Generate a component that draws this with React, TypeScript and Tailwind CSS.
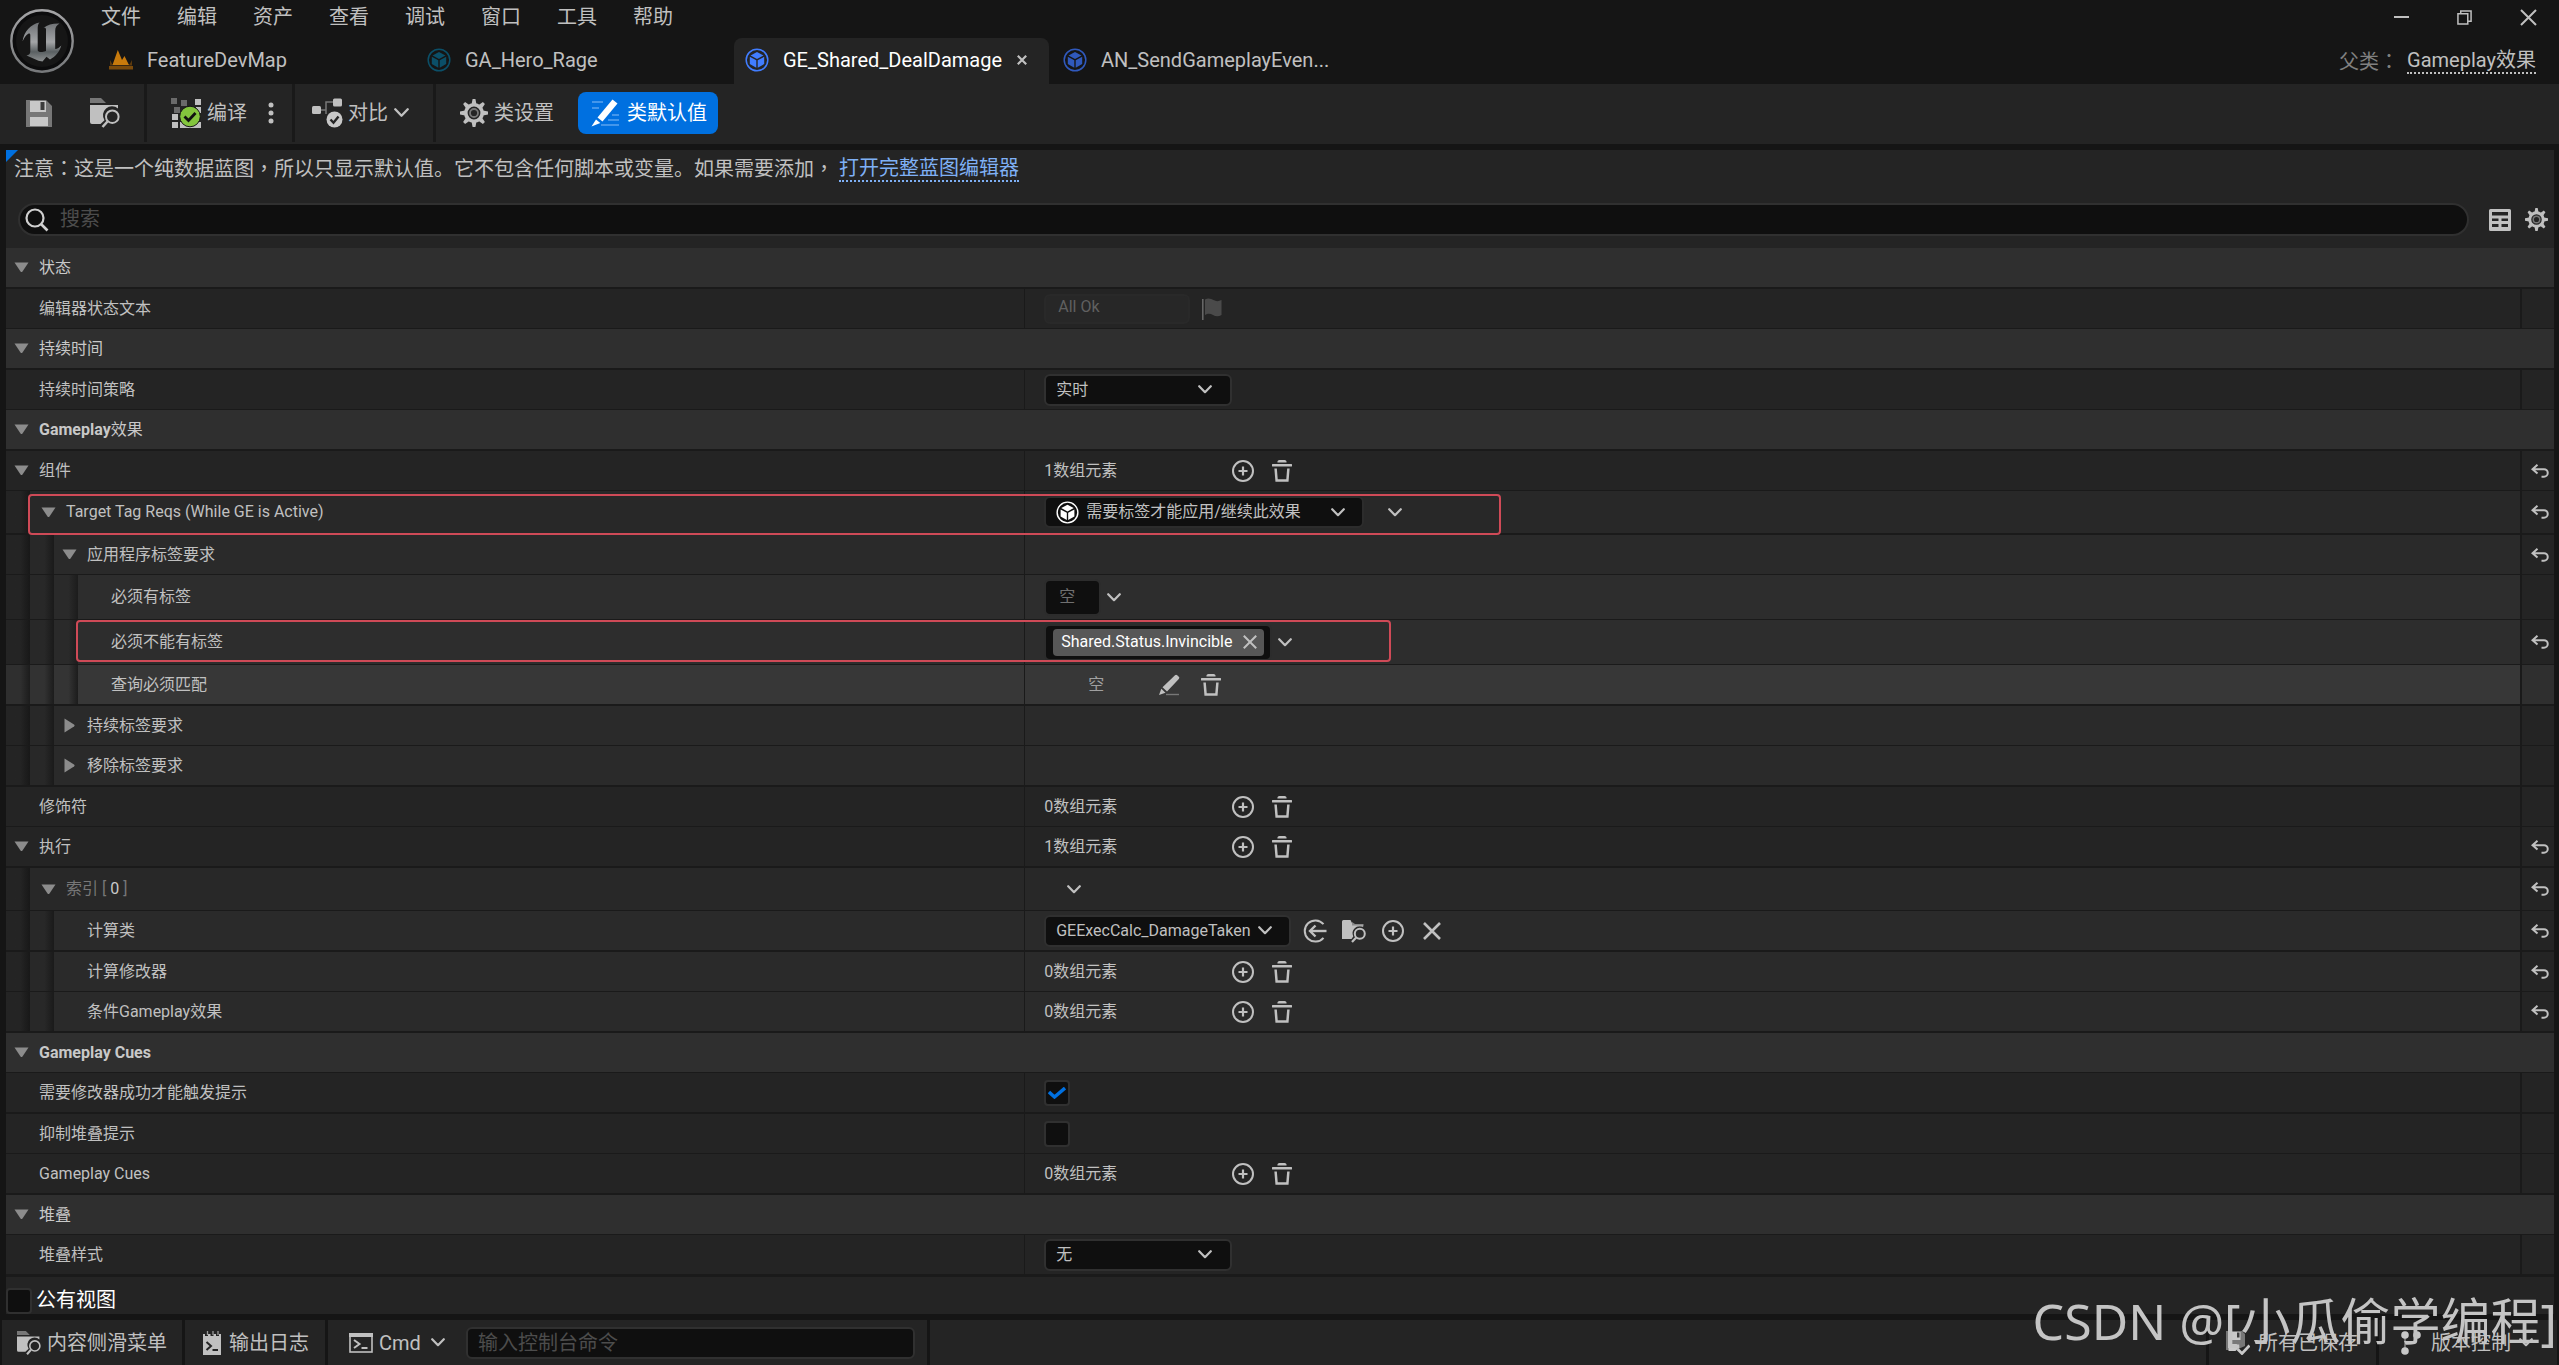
import { useState } from "react";
import type { ReactNode } from "react";

type IconProps = { className?: string };

/* ---------- icons ---------- */

function UnrealLogo({ className = "" }: IconProps) {
  return (
    <svg viewBox="0 0 64 64" className={className} aria-hidden="true">
      <defs>
        <linearGradient id="ue-ring" x1="0" y1="0" x2="0" y2="1">
          <stop offset="0" stopColor="#a4a4a6" />
          <stop offset="1" stopColor="#77797b" />
        </linearGradient>
        <linearGradient id="ue-letter" x1="0" y1="0" x2="0" y2="1">
          <stop offset="0" stopColor="#6d7073" />
          <stop offset="0.5" stopColor="#a3a5a7" />
          <stop offset="0.75" stopColor="#5a6062" />
          <stop offset="1" stopColor="#8d9091" />
        </linearGradient>
      </defs>
      <circle cx="32" cy="32" r="30.7" fill="#0c0c0d" stroke="url(#ue-ring)" strokeWidth="2.4" />
      <circle cx="32" cy="32" r="26" fill="#161616" />
      <path
        d="M12.500 32.500C14 22 21 15 29.500 13.500C28 15 27.700 17 27.700 20V41.500C29 43.300 31.500 43.600 36 42V20.500C36 19 35 18.300 33.500 19C37.500 15.500 43 14.300 49.500 14.500C46.500 16.200 45.200 18.500 45.200 22V40C47.500 39.800 49.500 38.500 51.300 36.500C49.500 43 45.500 47.500 40 50.500L36.500 47.800L32.500 52.500C27 52 22 48.500 16.500 46.500C19 46 20.300 45 20.300 42.500V26C20.300 24.500 19.500 24 18.200 24.700C16 26 14 29 12.500 32.500Z"
        fill="url(#ue-letter)"
      />
    </svg>
  );
}

function LevelIcon({ className = "" }: IconProps) {
  return (
    <svg viewBox="0 0 24 20" className={className} aria-hidden="true">
      <path d="M0 16h24v3.500H0z" fill="#7a4a0c" />
      <path d="M1 10l2.500 4.500h17L23 10v5.500H1z" fill="#5d3a0e" />
      <path d="M3.500 15L8.800 0l4.200 10 2.500-4L20 15z" fill="#c87a0c" />
    </svg>
  );
}

function CubeIcon({ className = "" }: IconProps) {
  return (
    <svg viewBox="0 0 24 24" className={className} fill="currentColor" aria-hidden="true">
      <circle cx="12" cy="12" r="10.800" fill="none" stroke="currentColor" strokeWidth="1.500" />
      <path d="M12 4l6.500 3.400L12 11 5.500 7.400z" />
      <path d="M4.800 8.800l6.500 3.500v7.400l-6.500-3.600z" />
      <path d="M19.200 8.800l-6.500 3.500v7.400l6.500-3.600z" />
    </svg>
  );
}

function SaveIcon({ className = "" }: IconProps) {
  return (
    <svg viewBox="0 0 26 27" className={className} aria-hidden="true">
      <path d="M0 0h20l6 6v21H0z" fill="#777777" />
      <path d="M4 1h16v11H4zM4 17h18v9H4z" fill="#c8c8c8" />
      <path d="M14.500 2h4v8h-4z" fill="#3c3c3c" />
    </svg>
  );
}

function BrowseIcon({ className = "" }: IconProps) {
  return (
    <svg viewBox="0 0 30 30" className={className} aria-hidden="true">
      <path d="M0 0h11l5 5H0z" fill="#777777" />
      <path d="M0 7h28v3.500a9 9 0 0 0-13.500 11.700L10.500 26H2a2 2 0 0 1-2-2z" fill="#c0c0c0" />
      <circle cx="22.300" cy="18.700" r="6.300" fill="none" stroke="#c0c0c0" strokeWidth="2" />
      <path d="M17.500 23.500l-5 5.500" stroke="#c0c0c0" strokeWidth="2.600" />
    </svg>
  );
}

function CompileIcon({ className = "" }: IconProps) {
  return (
    <svg viewBox="0 0 30 30" className={className} aria-hidden="true">
      <path d="M0 0h6v6H0zM10 2h6v6h-6zM3 9h6v6H3z" fill="#6a6a6a" />
      <path d="M24 1h6v6h-6zM1 16h6v6H1zM1 24h6v6H1zM9 24h21v6H9zM25 9h5v6h-5z" fill="#c0c0c0" />
      <circle cx="19" cy="18.500" r="10.300" fill="#83c53d" stroke="#161616" strokeWidth="1" />
      <path d="M13.500 18.500l4 4 7-7.500" fill="none" stroke="#111111" strokeWidth="2.800" />
    </svg>
  );
}

function DiffIcon({ className = "" }: IconProps) {
  return (
    <svg viewBox="0 0 31 30" className={className} aria-hidden="true">
      <path d="M8 12h6V4h8M14 12v4" fill="none" stroke="#777777" strokeWidth="1.500" />
      <rect x="0" y="8" width="9" height="8" rx="1.500" fill="#c0c0c0" />
      <rect x="21" y="0.500" width="9" height="8" rx="1.500" fill="#c0c0c0" />
      <circle cx="22.500" cy="21.500" r="8" fill="#c8c8c8" />
      <path d="M18.500 21.500l3 3.200 5-6.200" fill="none" stroke="#242424" strokeWidth="2.400" />
    </svg>
  );
}

const GEAR_TEETH = [0, 45, 90, 135, 180, 225, 270, 315];

function GearIcon({ className = "" }: IconProps) {
  return (
    <svg viewBox="0 0 28 28" className={className} aria-hidden="true">
      <circle cx="14" cy="14" r="8.200" fill="none" stroke="#c0c0c0" strokeWidth="3.600" />
      {GEAR_TEETH.map((a) => (
        <path key={a} d="M11.600 5L12.600 0h2.800l1 5z" fill="#c0c0c0" transform={`rotate(${a} 14 14)`} />
      ))}
      <circle cx="14" cy="14" r="4" fill="none" stroke="#777777" strokeWidth="1.800" />
    </svg>
  );
}

function EditDefaultsIcon({ className = "" }: IconProps) {
  return (
    <svg viewBox="0 0 28 28" className={className} aria-hidden="true">
      <path d="M1 3h11M1 9h7M21 16h7M17 21h11M10 26h18" stroke="#5aa2ee" strokeWidth="1.400" />
      <path d="M21.500 0.500L26.500 4.500L11.500 22.500L6.500 18.500z" fill="#ffffff" />
      <path d="M5 20.500L9.300 24L0.500 27.500z" fill="#ffffff" />
    </svg>
  );
}

function Chevron({ className = "" }: IconProps) {
  return (
    <svg viewBox="0 0 14 9" className={className} fill="none" stroke="currentColor" strokeWidth="2.200" strokeLinecap="round" strokeLinejoin="round" aria-hidden="true">
      <path d="M1.200 1.200L7 7.200L12.800 1.200" />
    </svg>
  );
}

function SearchIcon({ className = "" }: IconProps) {
  return (
    <svg viewBox="0 0 24 24" className={className} fill="none" stroke="#d0d0d0" strokeWidth="2.200" aria-hidden="true">
      <circle cx="10" cy="10" r="8.500" />
      <path d="M16 16l6.500 6.500" strokeWidth="2.600" />
    </svg>
  );
}

function TableViewIcon({ className = "" }: IconProps) {
  return (
    <svg viewBox="0 0 22 22" className={className} aria-hidden="true">
      <path fillRule="evenodd" fill="#c0c0c0" d="M1.500 0h19A1.500 1.500 0 0 1 22 1.500v19a1.500 1.500 0 0 1-1.500 1.500h-19A1.500 1.500 0 0 1 0 20.500v-19A1.500 1.500 0 0 1 1.500 0zM3 3v3.500h16V3zM3 9.500V12h6.500V9.500zM12.500 9.500V12H19V9.500zM3 15v3h6.500v-3zM12.500 15v3H19v-3z" />
    </svg>
  );
}

function FlagIcon({ className = "" }: IconProps) {
  return (
    <svg viewBox="0 0 20 22" className={className} aria-hidden="true">
      <path d="M0.800 1v21" stroke="#666666" strokeWidth="1.600" />
      <path d="M3 1.500c3-2 6-1 8.500 0.500s5 1.500 8 0v15c-3 2-6 1.500-8.500 0s-5-2-8 0z" fill="#4a4a4a" />
    </svg>
  );
}

function PlusCircle({ className = "" }: IconProps) {
  return (
    <svg viewBox="0 0 22 22" className={className} fill="none" stroke="currentColor" strokeWidth="2" aria-hidden="true">
      <circle cx="11" cy="11" r="10" />
      <path d="M11 6.500v9M6.500 11h9" strokeWidth="2.200" />
    </svg>
  );
}

function TrashIcon({ className = "" }: IconProps) {
  return (
    <svg viewBox="0 0 20 22" className={className} aria-hidden="true">
      <path d="M5.500 2.500a2 2 0 0 1 2-2.500h5a2 2 0 0 1 2 2.500z" fill="currentColor" />
      <path d="M0.800 5.300h18.400" stroke="currentColor" strokeWidth="2.400" strokeLinecap="round" />
      <path d="M3.600 8.500l1 12h10.800l1-12" fill="none" stroke="currentColor" strokeWidth="2.500" />
    </svg>
  );
}

function PencilIcon({ className = "" }: IconProps) {
  return (
    <svg viewBox="0 0 22 22" className={className} aria-hidden="true">
      <path d="M8 20.500h13" stroke="#777777" strokeWidth="1.400" />
      <path d="M17 1.300a1.500 1.500 0 0 1 2.200 0l1.600 1.500a1.500 1.500 0 0 1 0 2.200L9 17.500l-4.500-4.200z" fill="currentColor" />
      <path d="M3.300 14.800l4.200 4L1 21z" fill="currentColor" />
    </svg>
  );
}

function ResetIcon({ className = "" }: IconProps) {
  return (
    <svg viewBox="0 0 18 14" className={className} fill="none" stroke="currentColor" strokeWidth="2" aria-hidden="true">
      <path d="M6.500 0.800L1.500 5.200L6.500 9.600M1.500 5.200H13a3.600 3.600 0 0 1 0 7.500H10.500" />
    </svg>
  );
}

function UseArrowIcon({ className = "" }: IconProps) {
  return (
    <svg viewBox="0 0 24 24" className={className} fill="none" stroke="currentColor" strokeWidth="2" aria-hidden="true">
      <path d="M20.500 5.200a10.600 10.600 0 1 0 0 13.600" />
      <path d="M23.500 12H7" strokeWidth="2.400" />
      <path d="M12.500 6.500L7 12l5.500 5.500" strokeWidth="2.400" />
    </svg>
  );
}

function FolderFindIcon({ className = "" }: IconProps) {
  return (
    <svg viewBox="0 0 24 24" className={className} aria-hidden="true">
      <path d="M10 3l3 2h8.500v2.500H10z" fill="#8a8a8a" />
      <path d="M1.500 1h7l1.500 3v2.500h11v1.300a7.300 7.300 0 0 0-9.700 9.700L9.500 20H0V2.500A1.500 1.500 0 0 1 1.500 1z" fill="#c0c0c0" />
      <circle cx="17.800" cy="14.700" r="5" fill="none" stroke="#c0c0c0" strokeWidth="2" />
      <path d="M14.200 18.500L10 23" stroke="#c0c0c0" strokeWidth="2.200" />
    </svg>
  );
}

function CrossIcon({ className = "" }: IconProps) {
  return (
    <svg viewBox="0 0 18 18" className={className} fill="none" stroke="currentColor" strokeWidth="2.600" aria-hidden="true">
      <path d="M1 1l16 16M17 1L1 17" />
    </svg>
  );
}

function TabCloseIcon({ className = "" }: IconProps) {
  return (
    <svg viewBox="0 0 10 10" className={className} fill="none" stroke="currentColor" strokeWidth="2.200" aria-hidden="true">
      <path d="M0.800 0.800l8.400 8.400M9.200 0.800L0.800 9.200" />
    </svg>
  );
}

function TriangleDown({ className = "" }: IconProps) {
  return (
    <svg viewBox="0 0 15 11" className={className} aria-hidden="true">
      <path d="M0.500 0.500h14L8.500 9.500a1.300 1.300 0 0 1-2 0z" fill="#8c8c8c" />
    </svg>
  );
}

function TriangleRight({ className = "" }: IconProps) {
  return (
    <svg viewBox="0 0 11 15" className={className} aria-hidden="true">
      <path d="M0.500 0.500v14L10 8.500a1.300 1.300 0 0 0 0-2z" fill="#8c8c8c" />
    </svg>
  );
}

function LogIcon({ className = "" }: IconProps) {
  return (
    <svg viewBox="0 0 18 24" className={className} aria-hidden="true">
      <path d="M0 3h18v21H0z" fill="#c0c0c0" />
      <path d="M3.500 0v5M9 0v5M14.500 0v5" stroke="#242424" strokeWidth="3" />
      <path d="M4.500 0v4M10 0v4M15 0v4" stroke="#9a9a9a" strokeWidth="1.300" />
      <path d="M3.500 11l4.500 4-4.500 4M9.500 19h5.500" fill="none" stroke="#242424" strokeWidth="2" />
    </svg>
  );
}

function TerminalIcon({ className = "" }: IconProps) {
  return (
    <svg viewBox="0 0 24 20" className={className} fill="none" stroke="#c0c0c0" aria-hidden="true">
      <rect x="1" y="1" width="22" height="18" strokeWidth="1.600" />
      <path d="M0 2h24" strokeWidth="4" />
      <path d="M5 7l5.500 4L5 15M12.500 15h6" strokeWidth="2" />
    </svg>
  );
}

function SavedIcon({ className = "" }: IconProps) {
  return (
    <svg viewBox="0 0 24 24" className={className} aria-hidden="true">
      <path d="M0 0h16l3 3v12l-9 4H0z" fill="#777777" />
      <path d="M2.500 1h12v8h-12zM2.500 13h8l3 3-4 4h-7z" fill="#c8c8c8" />
      <path d="M11 1.500h2.500v5H11z" fill="#3c3c3c" />
      <path d="M11.500 18l4.500 4.500 7.500-8" fill="none" stroke="#c8c8c8" strokeWidth="2.800" />
    </svg>
  );
}

function BranchIcon({ className = "" }: IconProps) {
  return (
    <svg viewBox="0 0 20 24" className={className} aria-hidden="true">
      <path d="M4 4v16M4 13c8 0 12-2 12-9" fill="none" stroke="#777777" strokeWidth="1.800" />
      <circle cx="4" cy="4" r="3.800" fill="#c8c8c8" />
      <circle cx="16" cy="4" r="3.800" fill="#c8c8c8" />
      <circle cx="4" cy="20" r="3.800" fill="#c8c8c8" />
    </svg>
  );
}

/* ---------- controls ---------- */

/* Full-width punctuation drawn in the middle of its cell. */
function Mark({ children }: { children: string }) {
  return <span className="font-['Noto_Sans_CJK_TC',sans-serif]">{children}</span>;
}

function Combo({ id, label, options, className }: { id: string; label: string; options: string[]; className: string }) {
  return (
    <div className={`relative flex items-center ${className}`}>
      <select
        id={id}
        aria-label={label}
        className="h-full w-full appearance-none rounded-md border-2 border-[#303030] bg-[#0f0f0f] pl-2.5 text-base leading-6 text-[#c0c0c0] outline-none"
      >
        {options.map((o) => (
          <option key={o}>{o}</option>
        ))}
      </select>
      <Chevron className="pointer-events-none absolute right-5 w-3.5 text-[#c0c0c0]" />
    </div>
  );
}

function IconButton({ label, children, className = "" }: { label: string; children: ReactNode; className?: string }) {
  return (
    <button type="button" aria-label={label} className={`flex shrink-0 items-center justify-center text-[#c0c0c0] ${className}`}>
      {children}
    </button>
  );
}

function ArrayCount({ count }: { count: number }) {
  return (
    <>
      <span className="w-[188px]">{count}数组元素</span>
      <IconButton label="添加元素" className="mr-[18px]">
        <PlusCircle className="w-[22px]" />
      </IconButton>
      <IconButton label="清空">
        <TrashIcon className="w-5" />
      </IconButton>
    </>
  );
}

function CheckBox({ label, initial = false, id }: { label?: string; initial?: boolean; id: string }) {
  const [on, setOn] = useState(initial);
  return (
    <span className="relative flex size-[26px] shrink-0 items-center justify-center">
      <input
        id={id}
        type="checkbox"
        aria-label={label}
        checked={on}
        onChange={() => setOn(!on)}
        className="size-full appearance-none rounded border-2 border-[#303030] bg-[#0f0f0f]"
      />
      {on && (
        <svg viewBox="0 0 18 12" className="pointer-events-none absolute w-[18px]" fill="none" stroke="#0070e0" strokeWidth="3.400" aria-hidden="true">
          <path d="M1 5l5.500 5L17 1" />
        </svg>
      )}
    </span>
  );
}

/* ---------- property rows ---------- */

function Category({ title, border = "border-b-2" }: { title: ReactNode; border?: string }) {
  return (
    <div className={`box-content flex h-[39px] items-center border-[#1a1a1a] bg-[#2f2f2f] pl-2 ${border}`}>
      <button type="button" className="flex items-center gap-2.5 text-[#c8c8c8]">
        <TriangleDown className="w-[15px]" />
        <span>{title}</span>
      </button>
    </div>
  );
}

const GUIDES = [
  "bg-linear-to-r from-[#242424] from-60% to-[#181818]",
  "bg-linear-to-r from-[#282828] from-60% to-[#1a1a1a]",
  "bg-linear-to-r from-[#2a2a2a] from-60% to-[#1c1c1c]",
];
const HOVER_GUIDES = [
  "bg-linear-to-r from-[#2f2f2f] from-60% to-[#1c1c1c]",
  "bg-linear-to-r from-[#323232] from-60% to-[#1c1c1c]",
  "bg-linear-to-r from-[#343434] from-60% to-[#1c1c1c]",
];
const LEVEL_BG = ["bg-[#242424]", "bg-[#282828]", "bg-[#2a2a2a]", "bg-[#2d2d2d]"];

type RowProps = {
  name: ReactNode;
  level?: number;
  arrow?: "down" | "right";
  handle?: boolean;
  height?: string;
  border?: string;
  reset?: boolean;
  hovered?: boolean;
  outline?: string;
  children?: ReactNode;
};

function Row({ name, level = 0, arrow, handle, height = "h-[39px]", border = "border-b", reset, hovered, outline, children }: RowProps) {
  const bg = hovered ? "bg-[#373737]" : LEVEL_BG[level];
  const guides = hovered ? HOVER_GUIDES : GUIDES;
  return (
    <div className={`relative box-content flex border-[#1a1a1a] ${height} ${border}`}>
      <div className="flex w-2/5 shrink-0 border-r border-[#1a1a1a]">
        {guides.slice(0, level).map((g, i) => (
          <span key={i} className={`w-6 shrink-0 ${g}`} />
        ))}
        <div className={`flex flex-1 items-center ${handle ? "pl-[11px]" : "pl-2"} ${bg}`}>
          <span className="mr-2.5 flex w-[15px] justify-center">
            {arrow === "down" && <TriangleDown className="w-[15px]" />}
            {arrow === "right" && <TriangleRight className="w-[11px]" />}
          </span>
          <span>{name}</span>
        </div>
      </div>
      <div className={`flex min-w-0 flex-1 items-center pl-[19px] ${bg}`}>{children}</div>
      <div className={`flex w-[34px] shrink-0 items-center border-l-2 border-[#1a1a1a] pl-[9px] ${hovered ? "bg-[#2f2f2f]" : "bg-[#242424]"}`}>
        {reset && (
          <IconButton label="重置为默认值">
            <ResetIcon className="w-[18px]" />
          </IconButton>
        )}
      </div>
      {outline && <div className={`pointer-events-none absolute rounded border-2 border-[#cf4a57] ${outline}`} />}
    </div>
  );
}

/* ---------- page ---------- */

const MENUS = ["文件", "编辑", "资产", "查看", "调试", "窗口", "工具", "帮助"];

function Tab({ icon, title, active }: { icon: ReactNode; title: string; active?: boolean }) {
  return (
    <div className={`flex h-[46px] w-[315px] items-center rounded-t-lg pb-0.5 pl-[11px] ${active ? "bg-[#242424] text-white" : "text-[#c0c0c0]"}`}>
      <button type="button" role="tab" aria-selected={!!active} className="flex items-center gap-3.5">
        {icon}
        <span className="text-xl leading-6">{title}</span>
      </button>
      {active && (
        <IconButton label="关闭标签页" className="ml-[15px]">
          <TabCloseIcon className="w-2.5" />
        </IconButton>
      )}
    </div>
  );
}

function ToolSeparator() {
  return <span className="w-[3px] shrink-0 self-stretch bg-[#191919]" />;
}

export default function App() {
  return (
    <div className="relative flex min-h-screen flex-col bg-[#151515] font-['Roboto','Noto_Sans_CJK_SC',sans-serif] text-base leading-6 text-[#c0c0c0]">
      <header className="flex h-[84px]">
        <div className="flex w-[83px] shrink-0 justify-center pt-[9px]">
          <UnrealLogo className="size-16" />
        </div>
        <div className="flex min-w-0 flex-1 flex-col">
          <div className="flex h-[38px] items-start justify-between">
            <nav className="flex h-[34px]">
              {MENUS.map((m) => (
                <button key={m} type="button" className="w-19 text-xl leading-6">
                  {m}
                </button>
              ))}
            </nav>
            <div className="flex h-[34px] items-center gap-12 pr-[22px]">
              <IconButton label="最小化" className="w-[15px]">
                <span className="h-0.5 w-full bg-[#c0c0c0]" />
              </IconButton>
              <IconButton label="还原">
                <svg viewBox="0 0 16 16" className="w-[15px]" fill="none" stroke="currentColor" strokeWidth="1.600" aria-hidden="true">
                  <path d="M1 4h10.500v11H1zM4 4V1h11v11h-3.500" />
                </svg>
              </IconButton>
              <IconButton label="关闭">
                <svg viewBox="0 0 17 17" className="w-[17px]" fill="none" stroke="currentColor" strokeWidth="2" aria-hidden="true">
                  <path d="M1 1l15 15M16 1L1 16" />
                </svg>
              </IconButton>
            </div>
          </div>
          <div className="flex justify-between pl-[15px] pr-[23px]">
            <div role="tablist" className="flex gap-[3px]">
              <Tab icon={<LevelIcon className="w-6" />} title="FeatureDevMap" />
              <Tab icon={<CubeIcon className="w-6 text-[#0b4f68]" />} title="GA_Hero_Rage" />
              <Tab icon={<CubeIcon className="w-6 text-[#417dff]" />} title="GE_Shared_DealDamage" active />
              <Tab icon={<CubeIcon className="w-6 text-[#3059bd]" />} title="AN_SendGameplayEven..." />
            </div>
            <div className="flex items-center gap-2 text-xl leading-6">
              <span className="text-[#808080]">
                父类<Mark>：</Mark>
              </span>
              <a href="#parent" className="border-b-2 border-dotted border-[#c0c0c0]">
                Gameplay效果
              </a>
            </div>
          </div>
        </div>
      </header>

      <div className="flex h-[60px] items-center bg-[#242424] pb-0.5 text-xl leading-6">
        <IconButton label="保存" className="ml-[26px]">
          <SaveIcon className="w-[26px]" />
        </IconButton>
        <IconButton label="浏览" className="ml-[38px] mr-6">
          <BrowseIcon className="w-[30px]" />
        </IconButton>
        <ToolSeparator />
        <button type="button" className="ml-6 flex items-center gap-1.5">
          <CompileIcon className="w-[30px]" />
          编译
        </button>
        <IconButton label="编译选项" className="ml-[21px] mr-[18px]">
          <svg viewBox="0 0 6 22" className="w-1.5" fill="currentColor" aria-hidden="true">
            <circle cx="3" cy="3" r="2.500" />
            <circle cx="3" cy="11" r="2.500" />
            <circle cx="3" cy="19" r="2.500" />
          </svg>
        </IconButton>
        <ToolSeparator />
        <button type="button" className="ml-[17px] mr-6 flex items-center">
          <DiffIcon className="mr-[5px] w-[31px]" />
          对比
          <Chevron className="ml-1.5 w-[15px]" />
        </button>
        <ToolSeparator />
        <button type="button" className="ml-6 flex items-center gap-1.5">
          <GearIcon className="w-7" />
          类设置
        </button>
        <button type="button" className="ml-6 flex h-[42px] w-[140px] items-center gap-2 rounded-lg bg-[#0070e0] pl-[13px] text-white">
          <EditDefaultsIcon className="w-7" />
          类默认值
        </button>
      </div>

      <main className="my-1.5 ml-1.5 mr-[5px] flex flex-1 flex-col bg-[#242424]">
        <div className="relative h-[98px]">
          <svg viewBox="0 0 12 12" className="absolute left-0 top-0 w-3" aria-hidden="true">
            <path d="M0 0h12L0 12z" fill="#0070e0" />
          </svg>
          <p className="flex h-[53px] gap-[5px] pl-2 pt-1.5 text-xl leading-6">
            <span>
              注意<Mark>：</Mark>这是一个纯数据蓝图<Mark>，</Mark>所以只显示默认值。它不包含任何脚本或变量。如果需要添加<Mark>，</Mark>
            </span>
            <a href="#full-editor" className="self-start border-b-2 border-dotted border-[#7fb0f5] text-[#7fb0f5]">
              打开完整蓝图编辑器
            </a>
          </p>
          <div className="flex items-center pl-3 pr-1.5">
            <div className="relative flex flex-1 items-center">
              <SearchIcon className="absolute left-[7px] w-6" />
              <input
                type="search"
                aria-label="搜索"
                placeholder="搜索"
                className="h-[33px] w-full rounded-full border-2 border-[#303030] bg-[#0f0f0f] pb-0.5 pl-10 text-xl leading-6 outline-none placeholder:text-[#4c4c4c]"
              />
            </div>
            <IconButton label="表格视图" className="ml-5 mr-3.5">
              <TableViewIcon className="w-[22px]" />
            </IconButton>
            <IconButton label="设置">
              <GearIcon className="w-[23px]" />
            </IconButton>
          </div>
        </div>

        <div className="border-b-[3px] border-[#1a1a1a]">
          <Category title="状态" />
          <Row name="编辑器状态文本">
            <input
              aria-label="编辑器状态文本"
              readOnly
              value="All Ok"
              className="mr-3 h-[30px] w-[146px] rounded-md border-2 border-[#292929] bg-[#272727] px-3 pb-1 text-base leading-5 text-[#606060] outline-none"
            />
            <FlagIcon className="w-5" />
          </Row>
          <Category title="持续时间" />
          <Row name="持续时间策略">
            <Combo id="duration" label="持续时间策略" options={["实时", "无限", "有持续时间"]} className="h-8 w-[188px]" />
          </Row>
          <Category title={<><b className="font-bold">Gameplay</b>效果</>} />
          <Row name="组件" arrow="down" reset>
            <ArrayCount count={1} />
          </Row>
          <Row
            name="Target Tag Reqs (While GE is Active)"
            level={1}
            arrow="down"
            handle
            height="h-[42px]"
            border="border-b-2"
            reset
            outline="left-[22px] top-[3px] h-[41px] w-[1473px]"
          >
            <button type="button" className="flex h-8 w-80 items-center rounded-md border-2 border-[#2c2c2c] bg-[#0f0f0f] pl-2.5">
              <CubeIcon className="mr-[7px] w-[23px] text-white" />
              需要标签才能应用/继续此效果
              <Chevron className="ml-auto mr-[17px] w-3.5" />
            </button>
            <IconButton label="组件选项" className="ml-6">
              <Chevron className="w-3.5" />
            </IconButton>
          </Row>
          <Row name="应用程序标签要求" level={2} arrow="down" reset />
          <Row name="必须有标签" level={3} height="h-[44px]">
            <div className="flex h-[37px] w-[57px] items-center rounded-md border-2 border-[#2c2c2c] bg-[#0f0f0f] pl-[13px] text-[#707070]">空</div>
            <IconButton label="选择标签" className="ml-1.5">
              <Chevron className="w-3.5" />
            </IconButton>
          </Row>
          <Row name="必须不能有标签" level={3} height="h-[44px]" reset outline="left-[70px] top-0 h-[42px] w-[1315px]">
            <div className="flex h-[37px] w-[228px] items-center rounded-md border-2 border-[#2c2c2c] bg-[#0f0f0f] pl-[7px]">
              <div className="flex h-[27px] w-[211px] items-center justify-between rounded bg-[#575757] pl-2 pr-[7px] text-white">
                Shared.Status.Invincible
                <IconButton label="移除标签">
                  <CrossIcon className="w-3.5" />
                </IconButton>
              </div>
            </div>
            <IconButton label="选择标签" className="ml-1.5">
              <Chevron className="w-3.5" />
            </IconButton>
          </Row>
          <Row name="查询必须匹配" level={3} border="border-b-2" hovered>
            <span className="ml-11 w-[70px] text-[#a0a0a0]">空</span>
            <IconButton label="编辑查询" className="mr-[21px]">
              <PencilIcon className="w-[22px]" />
            </IconButton>
            <IconButton label="清除查询">
              <TrashIcon className="w-5" />
            </IconButton>
          </Row>
          <Row name="持续标签要求" level={2} arrow="right" />
          <Row name="移除标签要求" level={2} arrow="right" border="border-b-2" />
          <Row name="修饰符">
            <ArrayCount count={0} />
          </Row>
          <Row name="执行" arrow="down" border="border-b-2" reset>
            <ArrayCount count={1} />
          </Row>
          <Row
            name={
              <span className="text-[#777777]">
                索引 [ <span className="text-[#c8c8c8]">0</span> ]
              </span>
            }
            level={1}
            arrow="down"
            handle
            height="h-[42px]"
            reset
          >
            <IconButton label="元素选项" className="ml-[23px]">
              <Chevron className="w-3.5" />
            </IconButton>
          </Row>
          <Row name="计算类" level={2} border="border-b-2" reset>
            <button type="button" className="mr-3 flex h-8 w-[247px] items-center rounded-md border-2 border-[#303030] bg-[#0f0f0f] pl-2.5">
              GEExecCalc_DamageTaken
              <Chevron className="ml-auto mr-[17px] w-3.5" />
            </button>
            <IconButton label="使用选中项" className="mr-[15px]">
              <UseArrowIcon className="w-6" />
            </IconButton>
            <IconButton label="浏览到资产" className="mr-4">
              <FolderFindIcon className="w-6" />
            </IconButton>
            <IconButton label="新建" className="mr-[19px]">
              <PlusCircle className="w-[22px]" />
            </IconButton>
            <IconButton label="清除">
              <CrossIcon className="w-[18px]" />
            </IconButton>
          </Row>
          <Row name="计算修改器" level={2} reset>
            <ArrayCount count={0} />
          </Row>
          <Row name="条件Gameplay效果" level={2} border="border-b-2" reset>
            <ArrayCount count={0} />
          </Row>
          <Category title={<b className="font-bold">Gameplay Cues</b>} border="border-b" />
          <Row name={<label htmlFor="cue-success">需要修改器成功才能触发提示</label>} border="border-b-2">
            <CheckBox id="cue-success" initial />
          </Row>
          <Row name={<label htmlFor="cue-stack">抑制堆叠提示</label>}>
            <CheckBox id="cue-stack" />
          </Row>
          <Row name="Gameplay Cues" border="border-b-2">
            <ArrayCount count={0} />
          </Row>
          <Category title="堆叠" border="border-b" />
          <Row name="堆叠样式" border="border-b-0">
            <Combo id="stacking" label="堆叠样式" options={["无", "按源聚合", "按目标聚合"]} className="h-8 w-[188px]" />
          </Row>
        </div>

        <div className="flex flex-1 items-start gap-1 pt-[11px] text-xl leading-6 text-white">
          <CheckBox id="public-view" />
          <label htmlFor="public-view">公有视图</label>
        </div>
      </main>

      <footer className="flex h-[45px] justify-between gap-[3px] px-0.5 text-xl leading-6">
        <button type="button" className="flex w-[180px] items-center gap-1.5 bg-[#242424] pl-[15px]">
          <BrowseIcon className="w-6" />
          内容侧滑菜单
        </button>
        <button type="button" className="flex w-[140px] items-center gap-2 bg-[#242424] pl-[18px]">
          <LogIcon className="w-[18px]" />
          输出日志
        </button>
        <div className="flex w-[599px] items-center bg-[#242424] pl-[21px]">
          <button type="button" className="flex items-center gap-1.5">
            <TerminalIcon className="w-6" />
            Cmd
            <Chevron className="ml-1 w-3.5" />
          </button>
          <input
            type="text"
            aria-label="控制台命令"
            placeholder="输入控制台命令"
            className="ml-auto mr-3 h-8 w-[449px] rounded-md border-2 border-[#303030] bg-[#0f0f0f] pl-2.5 text-xl leading-6 outline-none placeholder:text-[#4c4c4c]"
          />
        </div>
        <div className="flex-1 bg-[#242424]" />
        <button type="button" className="flex w-[167px] items-center gap-2 bg-[#242424] pl-[17px]">
          <SavedIcon className="w-6" />
          所有已保存
        </button>
        <button type="button" className="flex w-[178px] items-center bg-[#242424] pl-[22px]">
          <BranchIcon className="mr-2.5 w-5" />
          版本控制
          <Chevron className="ml-2 w-3.5" />
        </button>
      </footer>

      <div className="pointer-events-none absolute bottom-3 right-0.5 whitespace-nowrap font-['Noto_Sans','Noto_Sans_CJK_SC',sans-serif] text-[50px] leading-[64px] text-[#c4c4c4]">
        CSDN @[小瓜偷学编程]
      </div>
    </div>
  );
}
